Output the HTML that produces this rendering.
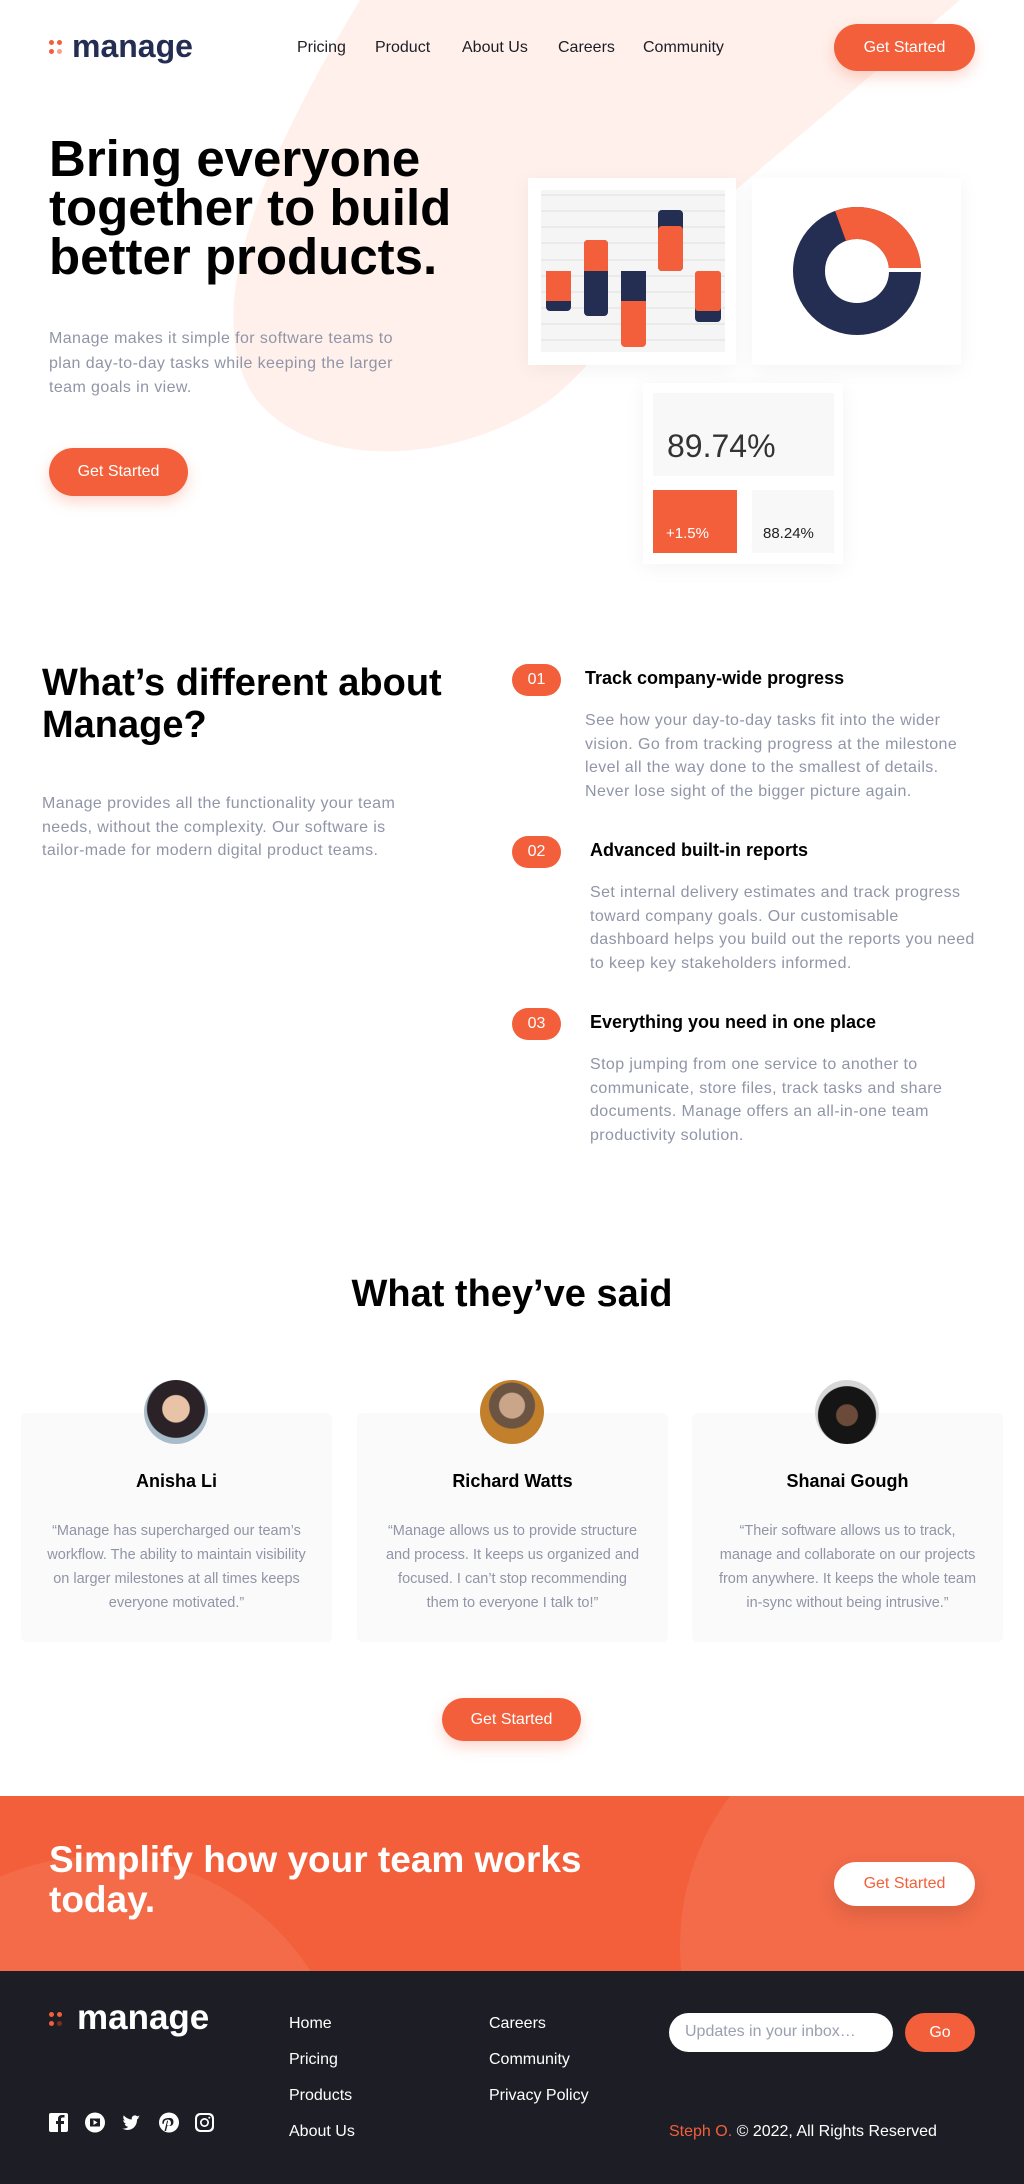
<!DOCTYPE html>
<html><head><meta charset="utf-8"><style>
*{margin:0;padding:0;box-sizing:border-box}
html,body{width:1024px;height:2184px;overflow:hidden}
body{position:relative;background:#fff;font-family:"Liberation Sans",sans-serif;color:#000}
.a{position:absolute}
.btn{position:absolute;background:#f25f3a;color:#fff;border-radius:24px;font-size:16px;display:flex;align-items:center;justify-content:center;box-shadow:0 6px 14px rgba(242,95,58,.25)}
.nav{font-size:16px;color:#1d1e25;top:39px}
.grey{color:#9095a7;letter-spacing:0.4px}
.card{position:absolute;background:#fafafa;border-radius:6px;top:1413px;width:311px;height:229px;text-align:center}
.card .nm{position:absolute;top:58px;width:100%;font-weight:bold;font-size:18px}
.card .q{position:absolute;top:106px;left:24px;right:24px;font-size:14.5px;line-height:24px;color:#9095a7}
.av{position:absolute;top:1380px;width:64px;height:64px;border-radius:50%}
.badge{position:absolute;left:512px;width:49px;height:32px;border-radius:16px;background:#f25f3a;color:#fff;font-size:16px;display:flex;align-items:center;justify-content:center}
.it{position:absolute;left:585px;font-weight:bold;font-size:18px}
.ds{position:absolute;left:585px;width:400px;font-size:16px;line-height:23.5px;color:#9095a7;letter-spacing:0.4px}
.fl{position:absolute;color:#fff;font-size:16px}
</style></head><body>
<svg class="a" style="left:0;top:0" width="1024" height="470"><path d="M360,0 C270,150 200,300 250,390 C300,470 450,470 550,400 C600,360 640,300 700,220 L960,0 Z" fill="#fff0eb"/></svg>

<div class="a" style="left:49px;top:40px;width:5px;height:5px;border-radius:50%;background:#f25f3a"></div>
<div class="a" style="left:57px;top:40px;width:5px;height:5px;border-radius:50%;background:#f25f3a"></div>
<div class="a" style="left:49px;top:49px;width:5px;height:5px;border-radius:50%;background:#f25f3a"></div>
<div class="a" style="left:57px;top:49px;width:5px;height:5px;border-radius:50%;background:#f9a18b"></div>
<div class="a" style="left:72px;top:28px;font-size:32px;font-weight:bold;color:#242d52">manage</div>
<div class="a nav" style="left:297px">Pricing</div>
<div class="a nav" style="left:375px">Product</div>
<div class="a nav" style="left:462px">About Us</div>
<div class="a nav" style="left:558px">Careers</div>
<div class="a nav" style="left:643px">Community</div>
<div class="btn" style="left:834px;top:24px;width:141px;height:47px">Get Started</div>

<div class="a" style="left:49px;top:134px;font-size:51px;font-weight:bold;line-height:49px">Bring everyone<br>together to build<br>better products.</div>
<div class="a grey" style="left:49px;top:327px;font-size:16px;line-height:24.5px;width:380px">Manage makes it simple for software teams to plan day-to-day tasks while keeping the larger team goals in view.</div>
<div class="btn" style="left:49px;top:448px;width:139px;height:48px">Get Started</div>

<div class="a" style="left:528px;top:178px;width:208px;height:187px;background:#fff;box-shadow:0 4px 20px rgba(0,0,0,.05)"></div>
<svg class="a" style="left:541px;top:190px" width="184" height="162">
<rect width="184" height="162" fill="#f5f5f5"/>
<g stroke="#e6e6e6" stroke-width="1.5"><line x1="0" y1="5" x2="184" y2="5"/><line x1="0" y1="21" x2="184" y2="21"/><line x1="0" y1="37" x2="184" y2="37"/><line x1="0" y1="53" x2="184" y2="53"/><line x1="0" y1="70" x2="184" y2="70"/><line x1="0" y1="86" x2="184" y2="86"/><line x1="0" y1="102" x2="184" y2="102"/><line x1="0" y1="118" x2="184" y2="118"/><line x1="0" y1="134" x2="184" y2="134"/><line x1="0" y1="150" x2="184" y2="150"/></g>
<rect x="5" y="81" width="25" height="40" rx="4" fill="#242d52"/><rect x="5" y="81" width="25" height="30" fill="#f25f3a"/>
<rect x="43" y="50" width="24" height="76" rx="4" fill="#242d52"/><rect x="43" y="50" width="24" height="31" rx="4" fill="#f25f3a"/><rect x="43" y="78" width="24" height="3" fill="#f25f3a"/>
<rect x="80" y="81" width="25" height="76" rx="4" fill="#f25f3a"/><rect x="80" y="81" width="25" height="30" fill="#242d52"/>
<rect x="117" y="20" width="25" height="61" rx="4" fill="#242d52"/><rect x="117" y="36" width="25" height="45" rx="4" fill="#f25f3a"/>
<rect x="154" y="81" width="26" height="51" rx="4" fill="#242d52"/><rect x="154" y="81" width="26" height="40" rx="3" fill="#f25f3a"/>
</svg>
<div class="a" style="left:752px;top:178px;width:209px;height:187px;background:#fff;box-shadow:0 4px 20px rgba(0,0,0,.05)"></div>
<svg class="a" style="left:793px;top:207px" width="128" height="128" viewBox="-64 -64 128 128">
<circle r="48" fill="none" stroke="#242d52" stroke-width="32"/>
<path d="M-21.9,-60.1 A64,64 0 0 1 64,-2 L32,-2 A32,32 0 0 0 -11,-30 Z" fill="#f25f3a"/>
<rect x="30" y="-3" width="36" height="4" fill="#fff"/>
</svg>
<div class="a" style="left:643px;top:383px;width:200px;height:181px;background:#fff;box-shadow:0 4px 20px rgba(0,0,0,.05)"></div>
<div class="a" style="left:653px;top:393px;width:181px;height:83px;background:#f8f8f8"></div>
<div class="a" style="left:667px;top:428px;font-size:32px;color:#333">89.74%</div>
<div class="a" style="left:653px;top:490px;width:84px;height:63px;background:#f25f3a"></div>
<div class="a" style="left:666px;top:525px;font-size:15px;color:#fff">+1.5%</div>
<div class="a" style="left:752px;top:490px;width:82px;height:63px;background:#f8f8f8"></div>
<div class="a" style="left:763px;top:525px;font-size:15px;color:#222">88.24%</div>

<div class="a" style="left:42px;top:662px;font-size:38px;font-weight:bold;line-height:42px">What’s different about<br>Manage?</div>
<div class="a grey" style="left:42px;top:792px;font-size:16px;line-height:23.5px;width:385px">Manage provides all the functionality your team needs, without the complexity. Our software is tailor-made for modern digital product teams.</div>
<div class="badge" style="top:664px">01</div>
<div class="it" style="top:668px">Track company-wide progress</div>
<div class="ds" style="top:709px">See how your day-to-day tasks fit into the wider vision. Go from tracking progress at the milestone level all the way done to the smallest of details. Never lose sight of the bigger picture again.</div>
<div class="badge" style="top:836px">02</div>
<div class="it" style="top:840px;left:590px">Advanced built-in reports</div>
<div class="ds" style="top:881px;left:590px;width:392px">Set internal delivery estimates and track progress toward company goals. Our customisable dashboard helps you build out the reports you need to keep key stakeholders informed.</div>
<div class="badge" style="top:1008px">03</div>
<div class="it" style="top:1012px;left:590px">Everything you need in one place</div>
<div class="ds" style="top:1053px;left:590px">Stop jumping from one service to another to communicate, store files, track tasks and share documents. Manage offers an all-in-one team productivity solution.</div>

<div class="a" style="left:0;width:1024px;text-align:center;top:1273px;font-size:38px;font-weight:bold">What they’ve said</div>
<div class="card" style="left:21px"><div class="nm">Anisha Li</div><div class="q">“Manage has supercharged our team’s workflow. The ability to maintain visibility on larger milestones at all times keeps everyone motivated.”</div></div>
<div class="card" style="left:357px"><div class="nm">Richard Watts</div><div class="q">“Manage allows us to provide structure and process. It keeps us organized and focused. I can’t stop recommending them to everyone I talk to!”</div></div>
<div class="card" style="left:692px"><div class="nm">Shanai Gough</div><div class="q">“Their software allows us to track, manage and collaborate on our projects from anywhere. It keeps the whole team in-sync without being intrusive.”</div></div>
<div class="av" style="left:144px;background:radial-gradient(circle at 50% 45%,#e8c3a8 0 28%,#2a2226 30% 60%,#a9bcc9 62%)"></div>
<div class="av" style="left:480px;background:radial-gradient(circle at 50% 40%,#c9a58a 0 25%,#6b5442 27% 45%,#c27f2c 47%)"></div>
<div class="av" style="left:815px;background:radial-gradient(circle at 50% 55%,#6b4a3a 0 22%,#151515 24% 60%,#d8d8d8 62%)"></div>
<div class="btn" style="left:442px;top:1698px;width:139px;height:43px">Get Started</div>

<div class="a" style="left:0;top:1796px;width:1024px;height:175px;background:#f25f3a;overflow:hidden">
<div class="a" style="left:-150px;top:60px;width:500px;height:500px;border-radius:50%;background:#f36b49"></div>
<div class="a" style="left:680px;top:-100px;width:500px;height:500px;border-radius:50%;background:#f36b49"></div>
<div class="a" style="left:49px;top:44px;font-size:37px;font-weight:bold;color:#fff;line-height:40px">Simplify how your team works<br>today.</div>
<div class="a" style="left:834px;top:66px;width:141px;height:44px;border-radius:22px;background:#fff;color:#f25f3a;font-size:16px;display:flex;align-items:center;justify-content:center;box-shadow:0 8px 20px rgba(0,0,0,.12)">Get Started</div>
</div>

<div class="a" style="left:0;top:1971px;width:1024px;height:213px;background:#1d1e25"></div>
<div class="a" style="left:49px;top:2012px;width:5px;height:5px;border-radius:50%;background:#f25f3a"></div>
<div class="a" style="left:57px;top:2012px;width:5px;height:5px;border-radius:50%;background:#f25f3a"></div>
<div class="a" style="left:49px;top:2021px;width:5px;height:5px;border-radius:50%;background:#f25f3a"></div>
<div class="a" style="left:57px;top:2021px;width:5px;height:5px;border-radius:50%;background:#7a2e1c"></div>
<div class="a" style="left:77px;top:1998px;font-size:35px;font-weight:bold;color:#fff">manage</div>
<div class="fl" style="left:289px;top:2015px">Home</div>
<div class="fl" style="left:289px;top:2051px">Pricing</div>
<div class="fl" style="left:289px;top:2087px">Products</div>
<div class="fl" style="left:289px;top:2123px">About Us</div>
<div class="fl" style="left:489px;top:2015px">Careers</div>
<div class="fl" style="left:489px;top:2051px">Community</div>
<div class="fl" style="left:489px;top:2087px">Privacy Policy</div>
<div class="a" style="left:669px;top:2013px;width:224px;height:39px;border-radius:20px;background:#fff;color:#9aa0ae;font-size:16px;padding:10px 16px">Updates in your inbox…</div>
<div class="a" style="left:905px;top:2013px;width:70px;height:39px;border-radius:20px;background:#f25f3a;color:#fff;font-size:16px;display:flex;align-items:center;justify-content:center">Go</div>
<div class="a" style="left:669px;top:2123px;font-size:16px;color:#fff"><span style="color:#f25f3a">Steph O.</span> © 2022, All Rights Reserved</div>
<svg class="a" style="left:49px;top:2112px" width="170" height="22" fill="#fff">
<rect x="0" y="1" width="19" height="19" rx="2"/><path d="M12,20 V12 H15 V9 H12 V7 Q12,5.5 13.5,5.5 H15.5 V3 H13 Q9,3 9,7 V9 H7 V12 H9 V20 Z" fill="#1d1e25"/>
<circle cx="46" cy="10.5" r="10"/><path d="M41,6.5 h10 v8 h-10 z" fill="#1d1e25"/><path d="M44.5,8 l4,2.5 -4,2.5z"/>
<path d="M91,5 c-.7.3-1.4.5-2.2.6.8-.5 1.4-1.2 1.7-2.1-.7.4-1.6.8-2.4.9-1.6-1.7-4.6-1.1-5.3 1.4-.1.6-.1 1.1 0 1.7-3.1-.2-6-1.7-8-4.1-1 1.8-.5 4 1.2 5.1-.6 0-1.2-.2-1.7-.5 0 1.9 1.3 3.5 3.1 3.9-.6.2-1.2.2-1.8.1.5 1.6 2 2.8 3.8 2.8-1.7 1.4-3.9 2-6 1.7 6.4 4 14.6-.4 14.6-8.6v-.4c.8-.6 1.4-1.2 1.9-2z"/>
<circle cx="120" cy="10.5" r="10"/><path d="M119,6 q5,-1 5.5,3.5 q0,4.5 -4,4.5 q-1.5,0 -2,-1 l-1.5,6 h-1.5 l2.5,-10 q.5,-1 1,0 l-1,4 q.5,1 1.5,1 q2.5,0 2.5,-3.5 q-.5,-3 -3.5,-3 q-4,.5 -3.5,4 l-1.5,.5 q-1,-5.5 5,-6z" fill="#1d1e25"/>
<rect x="146" y="1" width="19" height="19" rx="5"/><rect x="148" y="3" width="15" height="15" rx="4" fill="#1d1e25"/><circle cx="155.5" cy="10.5" r="4.5"/><circle cx="155.5" cy="10.5" r="2.8" fill="#1d1e25"/><circle cx="160.3" cy="5.7" r="1"/>
</svg>
</body></html>
